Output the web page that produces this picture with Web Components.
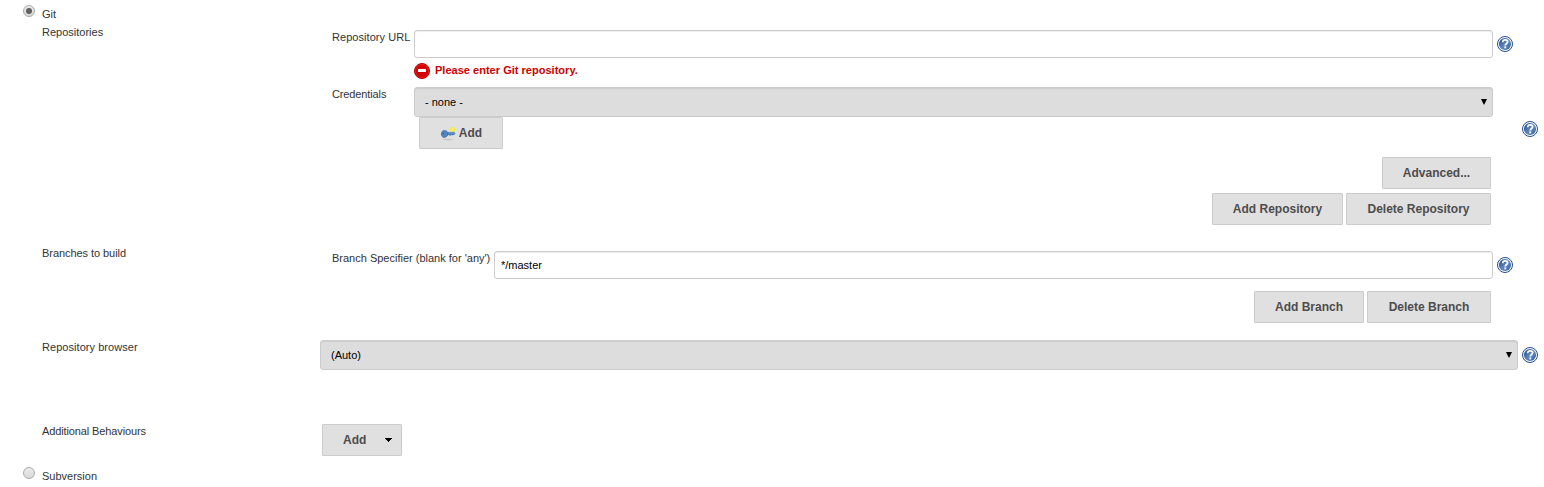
<!DOCTYPE html>
<html lang="en">
<head>
<meta charset="utf-8">
<title>Source Code Management</title>
<style>
html, body { margin: 0; background: #fff; }
body { font: 11px/13px "Liberation Sans", Arial, sans-serif; color: #333; overflow: hidden; }
</style>
</head>
<body>
<scm-config></scm-config>
<script>
function define(name, html) {
  const t = document.createElement('template');
  t.innerHTML = html;
  customElements.define(name, class extends HTMLElement {
    constructor() {
      super();
      this.attachShadow({ mode: 'open' }).appendChild(t.content.cloneNode(true));
    }
  });
}

define('scm-radio', `
<style>
:host { display: flex; height: 23px; padding-left: 23px; box-sizing: border-box; }
i { box-sizing: border-box; width: 12px; height: 12px; margin-top: 5px; border: 1px solid #aaa; border-radius: 50%;
    background: linear-gradient(#ececec, #d9d9d9); display: grid; place-items: center; }
:host([checked]) i::after { content: ""; width: 6px; height: 6px; border-radius: 50%; background: #606060; }
span { margin: 8px 0 0 7px; }
</style><i></i><span><slot></slot></span>`);

define('scm-section', `
<style>
:host { display: grid; grid-template-columns: 278px minmax(0, 1fr); padding-left: 42px; box-sizing: border-box; height: var(--section-h); }
.label { padding-top: var(--label-top, 0); }
</style><div class="label"><slot name="label"></slot></div><div><slot></slot></div>`);

define('scm-field', `
<style>
:host { display: flex; align-items: center; padding: 0 31px 0 12px; height: var(--field-h, 28px); }
.label { align-self: flex-start; padding-top: 1px; width: var(--label-width, 82px); flex: none; white-space: nowrap; }
.control { flex: 1; min-width: 0; }
.help { margin-left: 4px; width: 16px; display: flex; }
</style><div class="label"><slot name="label"></slot></div><div class="control"><slot></slot></div><div class="help"><slot name="help"></slot></div>`);

define('scm-input', `
<style>
:host { display: block; box-sizing: border-box; height: 28px; padding: 0 6px; line-height: 26px; color: #000; background: #fff;
  border: 1px solid #ccc; border-radius: 3px; box-shadow: inset 0 1px 1px rgba(0,0,0,.075); white-space: nowrap; }
</style><slot></slot>`);

define('scm-select', `
<style>
:host { display: flex; align-items: center; justify-content: space-between; box-sizing: border-box; height: 30px; padding: 0 5px 0 10px;
  color: #000; background: #ddd; border: 1px solid #ccc; border-radius: 3px; box-shadow: inset 0 1px 1px rgba(0,0,0,.075); }
svg { display: block; }
</style><span><slot></slot></span><svg width="6" height="6" viewBox="0 0 6 6"><path d="M0 0h6L3.3 5.6h-.6z"/></svg>`);

define('scm-button', `
<style>
:host { display: inline-flex; align-items: center; justify-content: center; box-sizing: border-box; width: var(--w); height: 32px; flex: none;
  font-weight: bold; font-size: 12px; line-height: 14px; color: #4d4d4d; background: #e0e0e0; border: 1px solid #ccc; border-radius: 1px; white-space: nowrap; }
:host([menu]) { justify-content: flex-start; padding-left: 20px; }
</style><slot></slot>`);

define('scm-actions', `
<style>
:host { display: flex; justify-content: flex-end; gap: 3px; padding-right: 53px; }
</style><slot></slot>`);

define('scm-help', `
<style>:host { display: block; width: 16px; height: 16px; flex: none; } svg { display: block; }</style>
<svg width="16" height="16" viewBox="0 0 16 16">
<defs><linearGradient id="g" x1="0" y1="0" x2="1" y2="1"><stop offset="0" stop-color="#204a87"/><stop offset=".55" stop-color="#6189c0"/><stop offset="1" stop-color="#2d5a98"/></linearGradient></defs>
<circle cx="8" cy="8" r="7.5" fill="#fff" stroke="#234d8b" stroke-width="1"/>
<circle cx="8" cy="8" r="6.1" fill="url(#g)"/>
<path d="M5.7 6.2C5.7 4.4 6.8 3.8 8.1 3.8c1.500 0 2.500.8 2.500 2 0 1.700-2.300 1.700-2.300 3.600" fill="none" stroke="#fff" stroke-width="1.7"/>
<rect x="7.4" y="10.4" width="1.800" height="2" fill="#fff"/>
</svg>`);

define('scm-error', `
<style>
:host { display: flex; align-items: center; gap: 5px; height: 16px; color: #c00; font-weight: bold; letter-spacing: .02px; }
svg { display: block; } span { margin-top: -2px; }
</style>
<svg width="16" height="16" viewBox="0 0 16 16">
<circle cx="8" cy="8" r="7.5" fill="#d40000" stroke="#b20000"/>
<circle cx="8" cy="8" r="6.5" fill="none" stroke="#e43a3a" stroke-width=".6"/>
<rect x="4" y="6" width="8" height="3" fill="#fff"/></svg>
<span><slot></slot></span>`);

define('scm-key-icon', `
<style>:host { display: block; width: 16px; height: 16px; margin: 0 3px 0 0; } svg { display: block; }</style>
<svg width="16" height="16" viewBox="0 0 16 16">
<ellipse cx="8" cy="14.6" rx="5.5" ry=".8" fill="#bbb" opacity=".65"/>
<circle cx="12.5" cy="4.5" r="2.5" fill="#f3ea3a"/><circle cx="12.5" cy="4.5" r="1" fill="#fffb9a"/>
<path d="M6 7.4h8.4l.6.9-.6 1.1h-1.1v.6h-1.4v-.6H11v.8H9.5v-.5H6z" fill="#5b8fcb" stroke="#3c6dab" stroke-width=".6"/>
<path d="M1.4 9c0-2.3 1.2-3.6 3-3.6 1.6 0 2.5.8 3.4 2v2.7C6.9 11.5 5.8 12.4 4.3 12.4 2.5 12.4 1.4 11.2 1.4 9z" fill="#5285c2" stroke="#3666a3" stroke-width=".7"/>
<circle cx="3.2" cy="8.5" r=".7" fill="#284f86"/>
</svg>`);

define('scm-caret', `
<style>:host { display: block; margin-left: 19px; } svg { display: block; }</style>
<svg width="7" height="4" viewBox="0 0 7 4" shape-rendering="crispEdges"><path d="M0 0h7v1H6v1H5v1H4v1H3V3H2V2H1V1H0z" fill="#000"/></svg>`);

define('scm-config', `
<style>
:host { display: flex; flex-direction: column; width: 1544px; height: 487px; }
.repositories { --section-h: 217px; --label-top: 3px; }
.branches { --section-h: 97px; --label-top: 7px; }
.browser { --section-h: 80px; --label-top: 4px; }
.behaviours { --section-h: 45px; --label-top: 8px; }
.stack { display: flex; flex-direction: column; }
.repos { padding-top: 7px; }
.first { margin-bottom: 5px; }
.error { margin: 0 0 8px 94px; }
.cred { --field-h: 30px; }
.add { display: flex; justify-content: space-between; padding: 0 6px 0 99px; margin-bottom: 8px; }
.add scm-help { margin-top: 4px; }
.advanced { margin-bottom: 4px; }
.branch { padding-top: 11px; gap: 12px; }
.branch scm-field { --label-width: 162px; }
.pick { display: flex; align-items: center; gap: 4px; padding: 3px 6px 0 0; }
.pick scm-select { flex: 1; }
.extra { padding: 7px 0 0 2px; }
.t1 { letter-spacing: -.12px; }
.t2 { letter-spacing: -.06px; }
.t3 { letter-spacing: .05px; }
</style>
<scm-radio checked>Git</scm-radio>
<scm-section class="repositories"><span slot="label">Repositories</span>
  <div class="stack repos">
    <scm-field class="first"><span slot="label" class="t3">Repository URL</span><scm-input></scm-input><scm-help slot="help"></scm-help></scm-field>
    <scm-error class="error">Please enter Git repository.</scm-error>
    <scm-field class="cred"><span slot="label" class="t1">Credentials</span><scm-select>- none -</scm-select></scm-field>
    <div class="add"><scm-button style="--w:84px"><scm-key-icon></scm-key-icon>Add</scm-button><scm-help></scm-help></div>
    <scm-actions class="advanced"><scm-button style="--w:109px">Advanced...</scm-button></scm-actions>
    <scm-actions><scm-button style="--w:131px">Add Repository</scm-button><scm-button style="--w:145px">Delete Repository</scm-button></scm-actions>
  </div>
</scm-section>
<scm-section class="branches"><span slot="label" class="t2">Branches to build</span>
  <div class="stack branch">
    <scm-field><span slot="label">Branch Specifier (blank for 'any')</span><scm-input>*/master</scm-input><scm-help slot="help"></scm-help></scm-field>
    <scm-actions><scm-button style="--w:110px">Add Branch</scm-button><scm-button style="--w:124px">Delete Branch</scm-button></scm-actions>
  </div>
</scm-section>
<scm-section class="browser"><span slot="label" class="t3">Repository browser</span>
  <div class="pick"><scm-select>(Auto)</scm-select><scm-help></scm-help></div>
</scm-section>
<scm-section class="behaviours"><span slot="label" class="t1">Additional Behaviours</span>
  <div class="extra"><scm-button menu style="--w:80px">Add<scm-caret></scm-caret></scm-button></div>
</scm-section>
<scm-radio>Subversion</scm-radio>`);
</script>
</body>
</html>
